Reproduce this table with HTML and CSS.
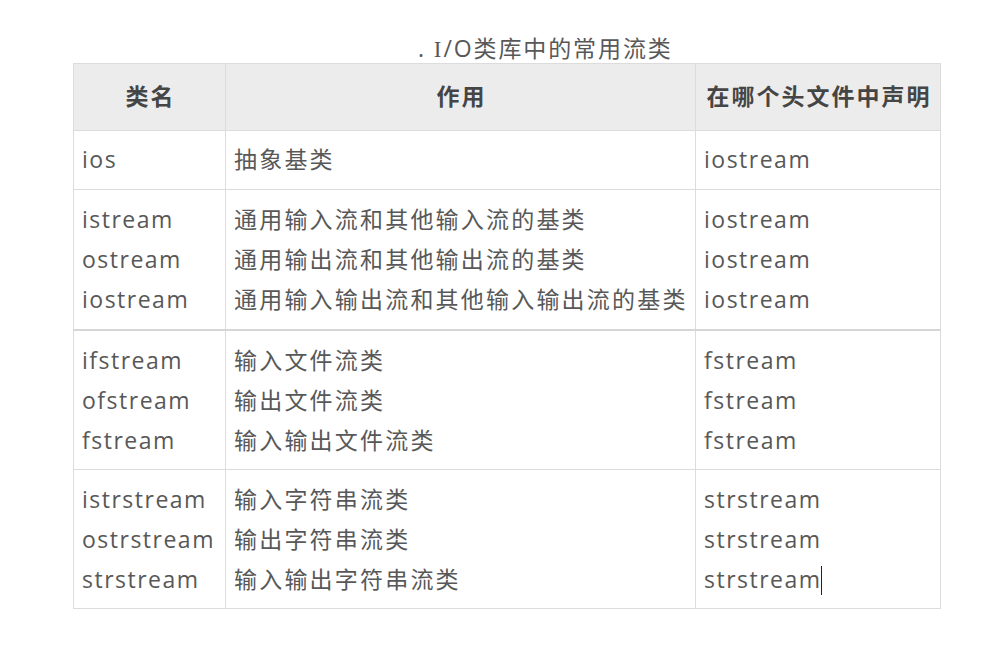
FILE: index.html
```html
<!DOCTYPE html>
<html lang="zh">
<head>
<meta charset="utf-8">
<title>I/O类库中的常用流类</title>
<link rel="stylesheet" href="styles.css">
</head>
<body>
<div class="page">
  <div class="caption">. <span class="serif">I</span>/O类库中的常用流类</div>
  <table class="streams">
    <colgroup>
      <col class="c1">
      <col class="c2">
      <col class="c3">
    </colgroup>
    <thead>
      <tr>
        <th>类名</th>
        <th>作用</th>
        <th>在哪个头文件中声明</th>
      </tr>
    </thead>
    <tbody>
      <tr class="single">
        <td>ios</td>
        <td class="zh">抽象基类</td>
        <td>iostream</td>
      </tr>
      <tr class="group thick">
        <td>istream<br>ostream<br>iostream</td>
        <td class="zh">通用输入流和其他输入流的基类<br>通用输出流和其他输出流的基类<br>通用输入输出流和其他输入输出流的基类</td>
        <td>iostream<br>iostream<br>iostream</td>
      </tr>
      <tr class="group">
        <td>ifstream<br>ofstream<br>fstream</td>
        <td class="zh">输入文件流类<br>输出文件流类<br>输入输出文件流类</td>
        <td>fstream<br>fstream<br>fstream</td>
      </tr>
      <tr class="group">
        <td>istrstream<br>ostrstream<br>strstream</td>
        <td class="zh">输入字符串流类<br>输出字符串流类<br>输入输出字符串流类</td>
        <td>strstream<br>strstream<br>strstream<span class="caret"></span></td>
      </tr>
    </tbody>
  </table>
</div>
</body>
</html>
```

FILE: styles.css
```css
html, body {
  margin: 0;
  padding: 0;
  background: #ffffff;
}

body {
  font-family: "Open Sans", "Noto Sans CJK SC", sans-serif;
  font-size: 23px;
  letter-spacing: 1.5px;
  color: #585858;
}

.page {
  padding: 34px 0 0 73px;
}

.caption {
  line-height: 29px;
  height: 29px;
  padding-left: 345px;
  letter-spacing: 1.9px;
  white-space: nowrap;
}

.serif {
  font-family: "Liberation Serif", serif;
}

.streams {
  border-collapse: collapse;
  table-layout: fixed;
  width: 867px;
}

.c1 { width: 152px; }
.c2 { width: 470px; }
.c3 { width: 245px; }

.streams th,
.streams td {
  border: 1px solid #dcdcdc;
  line-height: 40px;
  vertical-align: top;
  white-space: nowrap;
  overflow: visible;
}

.streams th {
  background: #ececec;
  color: #454545;
  font-weight: bold;
  text-align: center;
  letter-spacing: 2px;
  padding: 12px 2px 14px 4px;
}

.streams td {
  text-align: left;
  padding: 9px 4px 9px 8px;
}

.streams td.zh {
  letter-spacing: 2.2px;
}

.streams tr.single td {
  padding: 8px 4px 10px 8px;
}

.streams tr.thick td {
  padding-bottom: 10px;
  border-bottom: 2px solid #d6d6d6;
}

.caret {
  display: inline-block;
  width: 1px;
  height: 29px;
  background: #222222;
  vertical-align: -7px;
  margin-left: -1px;
}
```
